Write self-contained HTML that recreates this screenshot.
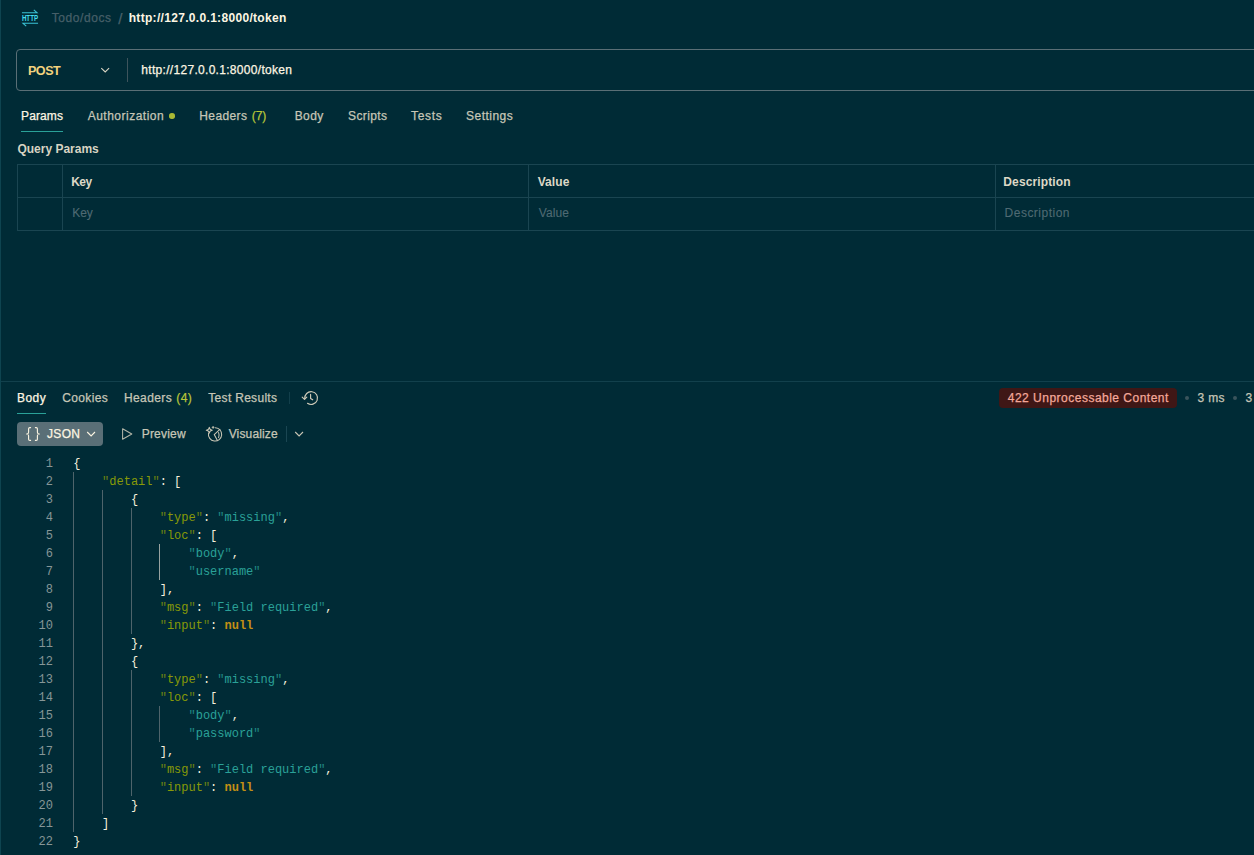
<!DOCTYPE html>
<html><head><meta charset="utf-8"><title>Postman</title><style>
html,body{margin:0;padding:0}
html{overflow:hidden;background:#002b36}
body{width:1254px;height:855px;background:#002b36;position:relative;overflow:hidden;font-family:"Liberation Sans", sans-serif;}
.t{position:absolute;white-space:pre;line-height:20px;height:20px;-webkit-text-stroke:0.25px currentColor}
.abs{position:absolute}
.ln{position:absolute;left:0;width:53px;text-align:right;font:12px/18px "Liberation Mono", monospace;color:#869697;height:18px}
.cl{position:absolute;white-space:pre;font:12px/18px "Liberation Mono", monospace;color:#f6f0dd;height:18px}
.cl i{font-style:normal;opacity:.78} .k{color:#889a08} .s{color:#2aa198} .n{color:#c48f14;font-weight:700}
.g{position:absolute;width:1px;background:#4e646b}
</style></head><body>

<div class="abs" style="left:0;top:0;width:1px;height:855px;background:#0e4450"></div>
<div class="abs" style="left:16px;top:49px;width:1260px;height:40px;border:1px solid #5a6f76;border-radius:4px"></div>
<div class="abs" style="left:127px;top:58px;width:1px;height:24px;background:#3d545c"></div>
<svg class="abs" style="left:99px;top:64px" width="12" height="12" viewBox="0 0 12 12"><path d="M2.3 4.2 L6.2 8 L10.1 4.2" fill="none" stroke="#d9d5c4" stroke-width="1.1"/></svg>
<div class="abs" style="left:21px;top:131px;width:42px;height:1px;background:#2aa198"></div>
<div class="abs" style="left:169.3px;top:113.3px;width:5.4px;height:5.4px;border-radius:50%;background:#a9b934"></div>
<!-- table -->
<div class="abs" style="left:17px;top:164px;width:1260px;height:67px;border:1px solid #1a4551;border-right:none;box-sizing:border-box"></div>
<div class="abs" style="left:17px;top:197px;width:1260px;height:1px;background:#1a4551"></div>
<div class="abs" style="left:62px;top:164px;width:1px;height:67px;background:#1a4551"></div>
<div class="abs" style="left:528px;top:164px;width:1px;height:67px;background:#1a4551"></div>
<div class="abs" style="left:995px;top:164px;width:1px;height:67px;background:#1a4551"></div>
<!-- response divider -->
<div class="abs" style="left:1px;top:381px;width:1253px;height:1px;background:#12404c"></div>
<div class="abs" style="left:17px;top:413px;width:29px;height:1px;background:#2aa198"></div>
<div class="abs" style="left:289px;top:392px;width:1px;height:12px;background:#123f4b"></div>
<!-- status badge -->
<div class="abs" style="left:999px;top:388px;width:177.6px;height:20px;border-radius:4px;background:#3f1716"></div>
<div class="abs" style="left:1185px;top:396px;width:4px;height:4px;border-radius:50%;background:#3a545c"></div>
<div class="abs" style="left:1233px;top:396px;width:4px;height:4px;border-radius:50%;background:#3a545c"></div>
<!-- JSON button -->
<div class="abs" style="left:17px;top:422px;width:85.8px;height:24px;border-radius:4px;background:#5a6f77"></div>
<div class="abs" style="left:286px;top:426px;width:1px;height:16px;background:#1a4652"></div>

<!-- HTTP icon -->
<svg class="abs" style="left:20px;top:8px" width="20" height="20" viewBox="20 8 20 20" fill="none" stroke="#3ac4d6" stroke-width="1.1" stroke-linecap="square">
<path d="M22.5 12.7 H37 L34.2 10.2"/>
<path d="M37.5 23.3 H23 L25.8 25.8"/>
<text x="21.9" y="21" font-family="Liberation Sans, sans-serif" font-size="8.3" font-weight="700" fill="#45dcee" stroke="none" textLength="16.2" lengthAdjust="spacingAndGlyphs">HTTP</text>
</svg>
<!-- history icon -->
<svg class="abs" style="left:300px;top:388px" width="22" height="20" viewBox="300 388 22 20" fill="none" stroke="#cfcbb9" stroke-width="1.15" stroke-linecap="round" stroke-linejoin="round">
<path d="M304.8 398.8 A6.4 6.4 0 1 1 307.5 403.3"/>
<path d="M302.2 397.2 L304.5 399.4 L306.8 397.2"/>
<path d="M310.6 394.4 V398.4 L312.7 399.8"/>
</svg>
<!-- braces icon -->
<svg class="abs" style="left:24px;top:425px" width="18" height="18" viewBox="24 425 18 18" fill="none" stroke="#fdf6e3" stroke-width="1.1" stroke-linecap="round" stroke-linejoin="round">
<path d="M30.6 427.6 H29.8 Q28.6 427.6 28.6 428.8 V432.2 Q28.6 434 26.6 434 Q28.6 434 28.6 435.8 V439.2 Q28.6 440.4 29.8 440.4 H30.6"/>
<path d="M35.4 427.6 H36.2 Q37.4 427.6 37.4 428.8 V432.2 Q37.4 434 39.4 434 Q37.4 434 37.4 435.8 V439.2 Q37.4 440.4 36.2 440.4 H35.4"/>
</svg>
<!-- JSON chevron -->
<svg class="abs" style="left:85px;top:428px" width="12" height="12" viewBox="85 428 12 12" fill="none" stroke="#fdf6e3" stroke-width="1.1"><path d="M87.2 432 L91.1 435.9 L95 432"/></svg>
<!-- play icon -->
<svg class="abs" style="left:120px;top:426px" width="16" height="16" viewBox="120 426 16 16" fill="none" stroke="#b3b6a8" stroke-width="1.05" stroke-linejoin="round"><path d="M122.6 428.8 L131.8 434 L122.6 439.2 Z"/></svg>
<!-- visualize icon -->
<svg class="abs" style="left:204px;top:424px" width="22" height="20" viewBox="204 424 22 20" fill="none" stroke="#c9c6b5" stroke-width="1.05" stroke-linecap="round" stroke-linejoin="round">
<path d="M215.4 427.75 A6.65 6.65 0 1 1 208.5 433.3"/>
<path d="M219.9 429.4 L214.2 434.6 L217.3 440.3"/>
<path d="M218.6 432.6 Q219.6 435 218.6 437.6"/>
<path d="M209.3 427.2 Q209.6 429.9 212.3 430.2 Q209.6 430.5 209.3 433.2 Q209 430.5 206.3 430.2 Q209 429.9 209.3 427.2 Z"/>
<path d="M213.1 426.4 V428.2 M212.2 427.3 H214"/>
</svg>
<!-- visualize chevron -->
<svg class="abs" style="left:293px;top:428px" width="12" height="12" viewBox="293 428 12 12" fill="none" stroke="#c9c6b5" stroke-width="1.1"><path d="M295.2 432 L299.1 435.9 L303 432"/></svg>

<span class="t" style="left:51.70px;top:8.04px;font-size:12px;font-weight:400;color:#465f68;letter-spacing:0.575px">Todo/docs</span>
<span class="t" style="left:118.30px;top:8.50px;font-size:15px;font-weight:400;color:#4a626b;letter-spacing:0.000px">/</span>
<span class="t" style="left:128.70px;top:8.04px;font-size:12px;font-weight:700;color:#fdf6e3;letter-spacing:0.317px;-webkit-text-stroke:0px">http://127.0.0.1:8000/token</span>
<span class="t" style="left:28.00px;top:60.73px;font-size:12.6px;font-weight:700;color:#f2d27e;letter-spacing:-0.535px;-webkit-text-stroke:0px">POST</span>
<span class="t" style="left:141.30px;top:60.14px;font-size:12px;font-weight:400;color:#fdf6e3;letter-spacing:0.304px">http://127.0.0.1:8000/token</span>
<span class="t" style="left:21.00px;top:105.84px;font-size:12px;font-weight:400;color:#fdf6e3;letter-spacing:0.131px">Params</span>
<span class="t" style="left:87.70px;top:105.84px;font-size:12px;font-weight:400;color:#c6c6b6;letter-spacing:0.494px">Authorization</span>
<span class="t" style="left:199.30px;top:105.84px;font-size:12px;font-weight:400;color:#c6c6b6;letter-spacing:0.390px">Headers</span>
<span class="t" style="left:251.70px;top:105.84px;font-size:12px;font-weight:400;color:#b8c638;letter-spacing:-0.038px">(7)</span>
<span class="t" style="left:294.70px;top:105.84px;font-size:12px;font-weight:400;color:#c6c6b6;letter-spacing:0.414px">Body</span>
<span class="t" style="left:348.00px;top:105.84px;font-size:12px;font-weight:400;color:#c6c6b6;letter-spacing:0.385px">Scripts</span>
<span class="t" style="left:411.00px;top:105.84px;font-size:12px;font-weight:400;color:#c6c6b6;letter-spacing:0.671px">Tests</span>
<span class="t" style="left:466.00px;top:105.84px;font-size:12px;font-weight:400;color:#c6c6b6;letter-spacing:0.477px">Settings</span>
<span class="t" style="left:17.40px;top:139.04px;font-size:12px;font-weight:700;color:#d8d4c3;letter-spacing:-0.002px;-webkit-text-stroke:0px">Query Params</span>
<span class="t" style="left:71.20px;top:172.04px;font-size:12px;font-weight:700;color:#ddd8c6;letter-spacing:-0.521px;-webkit-text-stroke:0px">Key</span>
<span class="t" style="left:537.70px;top:172.04px;font-size:12px;font-weight:700;color:#ddd8c6;letter-spacing:0.079px;-webkit-text-stroke:0px">Value</span>
<span class="t" style="left:1003.30px;top:172.04px;font-size:12px;font-weight:700;color:#ddd8c6;letter-spacing:0.121px;-webkit-text-stroke:0px">Description</span>
<span class="t" style="left:72.20px;top:203.14px;font-size:12px;font-weight:400;color:#4f6a73;letter-spacing:-0.044px;-webkit-text-stroke:0.1px">Key</span>
<span class="t" style="left:538.70px;top:203.14px;font-size:12px;font-weight:400;color:#4f6a73;letter-spacing:0.115px;-webkit-text-stroke:0.1px">Value</span>
<span class="t" style="left:1004.60px;top:203.14px;font-size:12px;font-weight:400;color:#4f6a73;letter-spacing:0.484px;-webkit-text-stroke:0.1px">Description</span>
<span class="t" style="left:17.00px;top:388.14px;font-size:12px;font-weight:400;color:#fdf6e3;letter-spacing:0.447px">Body</span>
<span class="t" style="left:62.30px;top:388.14px;font-size:12px;font-weight:400;color:#c6c6b6;letter-spacing:0.340px">Cookies</span>
<span class="t" style="left:124.00px;top:388.14px;font-size:12px;font-weight:400;color:#c6c6b6;letter-spacing:0.390px">Headers</span>
<span class="t" style="left:176.30px;top:388.14px;font-size:12px;font-weight:400;color:#b8c638;letter-spacing:0.362px">(4)</span>
<span class="t" style="left:208.30px;top:388.14px;font-size:12px;font-weight:400;color:#c6c6b6;letter-spacing:0.304px">Test Results</span>
<span class="t" style="left:1007.80px;top:388.14px;font-size:12px;font-weight:400;color:#f4a899;letter-spacing:0.490px">422 Unprocessable Content</span>
<span class="t" style="left:1197.50px;top:388.14px;font-size:12px;font-weight:400;color:#c6c6b6;letter-spacing:0.328px">3 ms</span>
<span class="t" style="left:1245.50px;top:388.14px;font-size:12px;font-weight:400;color:#c6c6b6;letter-spacing:0.000px">3</span>
<span class="t" style="left:47.00px;top:424.14px;font-size:12px;font-weight:400;color:#fdf6e3;letter-spacing:0.317px">JSON</span>
<span class="t" style="left:141.70px;top:424.14px;font-size:12px;font-weight:400;color:#c6c6b6;letter-spacing:0.213px">Preview</span>
<span class="t" style="left:228.70px;top:424.14px;font-size:12px;font-weight:400;color:#c6c6b6;letter-spacing:0.145px">Visualize</span>
<div class="ln" style="top:455px">1</div>
<div class="cl" style="top:455px;left:73.3px">{</div>
<div class="ln" style="top:473px">2</div>
<div class="cl" style="top:473px;left:102.1px"><span class="k"><i>"</i>detail<i>"</i></span>: [</div>
<div class="ln" style="top:491px">3</div>
<div class="cl" style="top:491px;left:130.9px">{</div>
<div class="ln" style="top:509px">4</div>
<div class="cl" style="top:509px;left:159.7px"><span class="k"><i>"</i>type<i>"</i></span>: <span class="s"><i>"</i>missing<i>"</i></span>,</div>
<div class="ln" style="top:527px">5</div>
<div class="cl" style="top:527px;left:159.7px"><span class="k"><i>"</i>loc<i>"</i></span>: [</div>
<div class="ln" style="top:545px">6</div>
<div class="cl" style="top:545px;left:188.5px"><span class="s"><i>"</i>body<i>"</i></span>,</div>
<div class="ln" style="top:563px">7</div>
<div class="cl" style="top:563px;left:188.5px"><span class="s"><i>"</i>username<i>"</i></span></div>
<div class="ln" style="top:581px">8</div>
<div class="cl" style="top:581px;left:159.7px">],</div>
<div class="ln" style="top:599px">9</div>
<div class="cl" style="top:599px;left:159.7px"><span class="k"><i>"</i>msg<i>"</i></span>: <span class="s"><i>"</i>Field required<i>"</i></span>,</div>
<div class="ln" style="top:617px">10</div>
<div class="cl" style="top:617px;left:159.7px"><span class="k"><i>"</i>input<i>"</i></span>: <b class="n">null</b></div>
<div class="ln" style="top:635px">11</div>
<div class="cl" style="top:635px;left:130.9px">},</div>
<div class="ln" style="top:653px">12</div>
<div class="cl" style="top:653px;left:130.9px">{</div>
<div class="ln" style="top:671px">13</div>
<div class="cl" style="top:671px;left:159.7px"><span class="k"><i>"</i>type<i>"</i></span>: <span class="s"><i>"</i>missing<i>"</i></span>,</div>
<div class="ln" style="top:689px">14</div>
<div class="cl" style="top:689px;left:159.7px"><span class="k"><i>"</i>loc<i>"</i></span>: [</div>
<div class="ln" style="top:707px">15</div>
<div class="cl" style="top:707px;left:188.5px"><span class="s"><i>"</i>body<i>"</i></span>,</div>
<div class="ln" style="top:725px">16</div>
<div class="cl" style="top:725px;left:188.5px"><span class="s"><i>"</i>password<i>"</i></span></div>
<div class="ln" style="top:743px">17</div>
<div class="cl" style="top:743px;left:159.7px">],</div>
<div class="ln" style="top:761px">18</div>
<div class="cl" style="top:761px;left:159.7px"><span class="k"><i>"</i>msg<i>"</i></span>: <span class="s"><i>"</i>Field required<i>"</i></span>,</div>
<div class="ln" style="top:779px">19</div>
<div class="cl" style="top:779px;left:159.7px"><span class="k"><i>"</i>input<i>"</i></span>: <b class="n">null</b></div>
<div class="ln" style="top:797px">20</div>
<div class="cl" style="top:797px;left:130.9px">}</div>
<div class="ln" style="top:815px">21</div>
<div class="cl" style="top:815px;left:102.1px">]</div>
<div class="ln" style="top:833px">22</div>
<div class="cl" style="top:833px;left:73.3px">}</div>
<div class="g" style="left:73px;top:472px;height:360px"></div>
<div class="g" style="left:102px;top:490px;height:324px"></div>
<div class="g" style="left:131px;top:508px;height:126px"></div>
<div class="g" style="left:131px;top:670px;height:126px"></div>
<div class="g" style="left:159px;top:544px;height:36px;background:#98a2a0"></div>
<div class="g" style="left:159px;top:706px;height:36px"></div>
</body></html>
